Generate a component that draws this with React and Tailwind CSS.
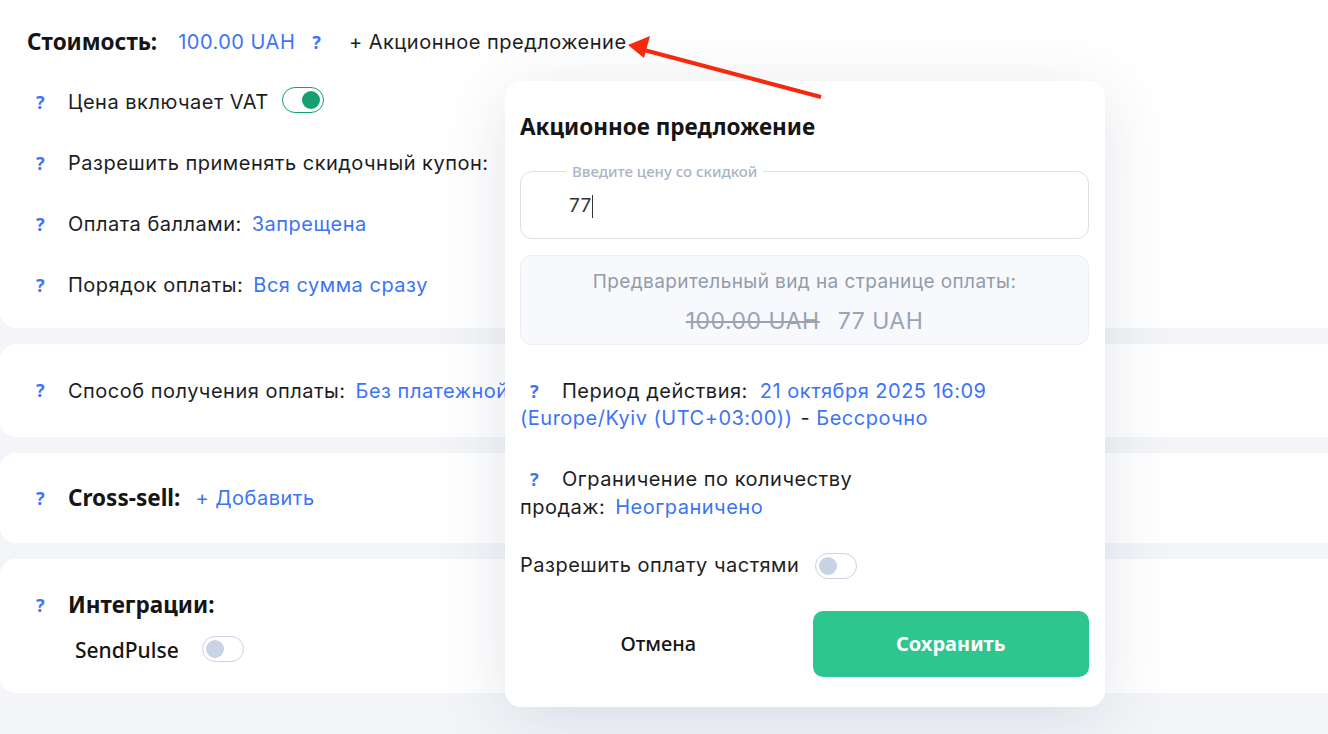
import React from "react";

const Q = ({ className = "" }) => (
  <span className={"inline-block text-[#3d74f5] font-bold font-['Noto_Sans'] tracking-normal " + className}>?</span>
);

const Toggle = ({ on }) =>
  on ? (
    <span className="inline-flex items-center justify-end w-[42px] h-[26px] rounded-full border border-[#16a06f] bg-white px-[3px]">
      <span className="w-[18px] h-[18px] rounded-full bg-[#16a06f]" />
    </span>
  ) : (
    <span className="inline-flex items-center w-[42px] h-[26px] rounded-full border border-[#c9d3e4] bg-white px-[3px]">
      <span className="w-[18px] h-[18px] rounded-full bg-[#c8d3e5]" />
    </span>
  );

const Row = ({ label, value, children }) => (
  <div className="flex items-center h-[28px]">
    <Q className="w-[32px] text-[18px]" />
    <span className="text-[#1d1d1f]">{label}</span>
    {value && <span className="ml-[10px] text-[#3d74f5]">{value}</span>}
    {children}
  </div>
);

const Modal = () => (
  <div className="absolute left-[505px] top-[81px] w-[600px] h-[626px] bg-white rounded-2xl shadow-[0_12px_70px_rgba(40,55,90,0.13)] pl-[15px] pr-[16px] pt-[32px]">
    <h2 className="font-['Noto_Sans'] font-bold text-[22.5px] leading-[28px] tracking-normal text-[#151515]">
      Акционное предложение
    </h2>

    <fieldset className="mt-[21px] h-[77px] border border-[#dcdfe8] rounded-xl">
      <legend className="ml-[45px] px-[6px] font-['Noto_Sans'] font-medium text-[15px] leading-[18px] tracking-normal text-[#aab4c7]">
        Введите цену со скидкой
      </legend>
      <div className="flex items-center h-[52px] pl-[48px] text-[19px] text-[#333]">
        77<span className="w-[1.5px] h-[23px] bg-[#333]" />
      </div>
    </fieldset>

    <div className="mt-[16px] h-[90px] bg-[#f8f9fc] border border-[#eceef3] rounded-xl flex flex-col items-center pt-[13px]">
      <div className="text-[19px] leading-[26px] tracking-[0.4px] text-[#949baa]">
        Предварительный вид на странице оплаты:
      </div>
      <div className="mt-[12px] text-[23px] leading-[28px] tracking-[0.5px] text-[#9ba3b3]">
        <span className="line-through decoration-[2px]">100.00 UAH</span>
        <span className="ml-[18px]">77 UAH</span>
      </div>
    </div>

    <div className="mt-[33px] leading-[27px] text-[#1d1d1f]">
      <Q className="ml-[10px] w-[32px] text-[18px]" />
      <span>Период действия:</span>
      <span className="ml-[12px] text-[#3d74f5]">21 октября 2025 16:09</span>
      <br />
      <span className="text-[#3d74f5]">(Europe/Kyiv (UTC+03:00))</span>
      <span className="ml-[8px]">- </span>
      <span className="text-[#3d74f5]">Бессрочно</span>
    </div>

    <div className="mt-[33px] leading-[28px] text-[#1d1d1f]">
      <Q className="ml-[10px] w-[32px] text-[18px]" />
      <span>Ограничение по количеству</span>
      <br />
      <span>продаж:</span>
      <span className="ml-[10px] text-[#3d74f5]">Неограничено</span>
    </div>

    <div className="mt-[30px] flex items-center gap-[16px] h-[28px] text-[#222]">
      <span>Разрешить оплату частями</span>
      <span className="mt-[5px]"><Toggle /></span>
    </div>

    <div className="mt-[32px] grid grid-cols-2 gap-4 h-[66px] font-['Noto_Sans'] text-[20px] tracking-normal">
      <button className="font-medium text-[#151515]">Отмена</button>
      <button className="rounded-[10px] bg-[#2ec68f] text-white font-bold">Сохранить</button>
    </div>
  </div>
);

export default function App() {
  return (
    <div className="relative w-[1328px] h-[734px] overflow-hidden bg-[#f3f5f8] font-['Inter'] text-[20px] tracking-[0.5px]">
      <div className="flex flex-col gap-4">
        <div className="h-[328px] bg-white rounded-bl-2xl pt-[28px]">
          <div className="flex items-center h-[28px] pl-[27px]">
            <span className="font-['Noto_Sans'] font-bold text-[22.5px] tracking-normal text-[#151515]">Стоимость:</span>
            <span className="ml-[21px] text-[#3d74f5]">100.00 UAH</span>
            <Q className="ml-[17px] text-[18px]" />
            <span className="ml-[28px] text-[#1d1d1f]">+ Акционное предложение</span>
          </div>
          <div className="flex flex-col gap-[33px] mt-[32px] pl-[36px]">
            <Row label="Цена включает VAT">
              <span className="ml-[13px]"><Toggle on /></span>
            </Row>
            <Row label="Разрешить применять скидочный купон:" />
            <Row label="Оплата баллами:" value="Запрещена" />
            <Row label="Порядок оплаты:" value="Вся сумма сразу" />
          </div>
        </div>

        <div className="h-[93px] bg-white rounded-l-2xl flex items-center pl-[36px]">
          <Row label="Способ получения оплаты:" value="Без платежной системы" />
        </div>

        <div className="h-[90px] bg-white rounded-l-2xl flex items-center pl-[36px]">
          <div className="flex items-center h-[28px]">
            <Q className="w-[32px] text-[18px]" />
            <span className="font-['Noto_Sans'] font-bold text-[22.5px] tracking-normal text-[#151515]">Cross-sell:</span>
            <span className="ml-[15px] text-[#3d74f5]">+ Добавить</span>
          </div>
        </div>

        <div className="h-[134px] bg-white rounded-l-2xl pl-[36px] pt-[32px]">
          <div className="flex items-center h-[28px]">
            <Q className="w-[32px] text-[18px]" />
            <span className="font-['Noto_Sans'] font-bold text-[22.5px] tracking-normal text-[#151515]">Интеграции:</span>
          </div>
          <div className="flex items-center h-[28px] mt-[18px] pl-[39px]">
            <span className="font-['Noto_Sans'] font-medium text-[21px] tracking-normal text-[#151515]">SendPulse</span>
            <span className="ml-[23px]"><Toggle /></span>
          </div>
        </div>
      </div>

      <Modal />

      <svg className="absolute left-0 top-0" width="1328" height="734" viewBox="0 0 1328 734">
        <line x1="821" y1="97" x2="644" y2="50" stroke="#f4290e" strokeWidth="4" />
        <polygon points="628,45 650,36 644,58" fill="#f4290e" />
      </svg>
    </div>
  );
}
